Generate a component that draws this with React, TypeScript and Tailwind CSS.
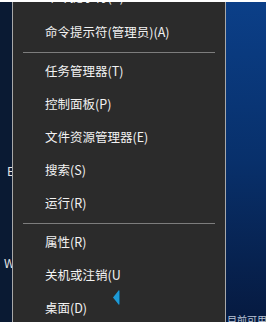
const items: (string | null)[] = [
  "命令提示符(C)",
  "命令提示符(管理员)(A)",
  null,
  "任务管理器(T)",
  "控制面板(P)",
  "文件资源管理器(E)",
  "搜索(S)",
  "运行(R)",
  null,
  "属性(R)",
  "关机或注销(U",
  "桌面(D)",
];

export default function App() {
  return (
    <div
      className="w-[272px] h-[322px] bg-white overflow-hidden pt-[2px]"
      style={{ fontFamily: '"Noto Sans CJK SC", "Noto Sans", sans-serif' }}
    >
      <div className="flex w-[266px] h-[320px]">
        {/* desktop strip on the left */}
        <div className="w-[12px] shrink-0 bg-[#0a1a33] overflow-hidden flex flex-col text-[#e6e6e6] text-[12px] leading-none">
          <span className="mt-[163px] pl-[7px]">E</span>
          <span className="mt-[80px] pl-[4px]">W</span>
        </div>

        {/* context menu */}
        <div className="relative w-[214px] shrink-0 bg-[#2b2b2b] border-x border-[#a8a8a8] overflow-hidden">
          <div className="-mt-[23px] flex flex-col">
            {items.map((t, i) =>
              t === null ? (
                <div key={i} className="h-[6px] flex items-center px-[10px]">
                  <div className="h-px w-full bg-[#7d7d7d]" />
                </div>
              ) : (
                <div
                  key={i}
                  className={
                    (i === 0 ? "h-[37px] " : "h-[33px] ") +
                    "flex items-center pl-[32px] text-[12.5px] text-[#f2f2f2]"
                  }
                >
                  {t}
                </div>
              )
            )}
          </div>
          <svg
            className="absolute left-[100px] top-[288px]"
            width="7"
            height="15"
            viewBox="0 0 7 15"
          >
            <polygon points="6,0 0,7.5 6,15" fill="#1d9ad6" />
            <polygon points="6,0 7,1 7,14 6,15" fill="#0e5f8a" />
          </svg>
        </div>

        {/* desktop on the right */}
        <div className="flex-1 bg-gradient-to-b from-[#0b3f88] via-[#08306b] to-[#061a40] flex flex-col justify-end overflow-hidden">
          <span className="text-[10px] leading-none text-[#b8c4d6] whitespace-nowrap -mb-[3px] pl-[1px]">
            目前可用
          </span>
        </div>
      </div>
    </div>
  );
}
